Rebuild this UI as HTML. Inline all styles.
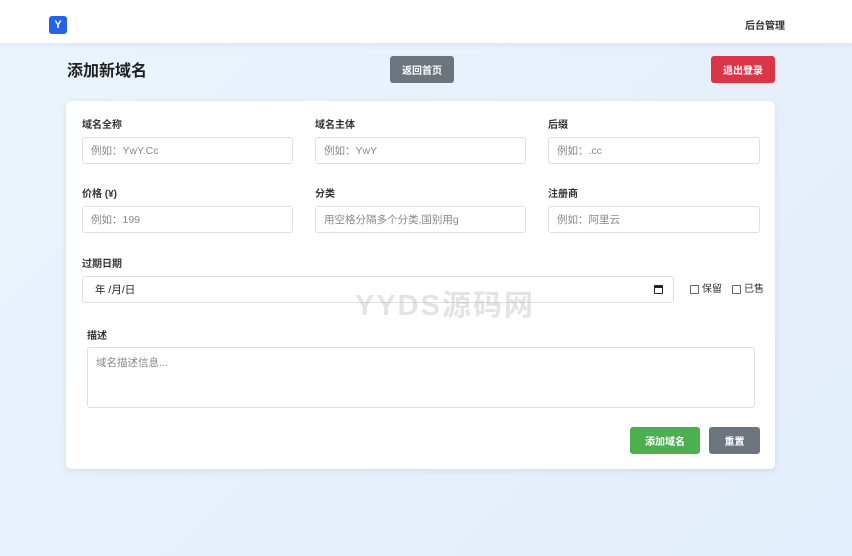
<!DOCTYPE html>
<html><head><meta charset="utf-8"><style>
*{box-sizing:border-box;margin:0;padding:0}
body{width:852px;height:556px;overflow:hidden;position:relative;font-family:"Liberation Sans","Noto Sans CJK SC",sans-serif;background:linear-gradient(135deg,#eaf4fc 0%,#e6f0fb 60%,#e2eefb 100%);color:#333}
.a{position:absolute}
.hdr{left:0;top:0;width:852px;height:43px;background:#fff;box-shadow:0 2px 6px rgba(0,0,0,.06)}
.logo{left:49px;top:16px;width:18px;height:18px;background:#2563eb;border-radius:3px;color:#fff;font-weight:bold;font-size:11px;display:flex;align-items:center;justify-content:center}
.btn{border-radius:3px;color:#fff;font-size:10px;font-weight:bold;display:flex;align-items:center;justify-content:center}
.card{left:66px;top:101px;width:709px;height:368px;background:#fff;border-radius:6px;box-shadow:0 2px 8px rgba(0,0,0,.08)}
.lbl{font-size:10px;font-weight:bold;color:#333;line-height:14px}
.in{border:1px solid #dcdfe3;border-radius:3px;height:27px;font-size:10.5px;color:#888;padding-left:8px;background:#fff;display:flex;align-items:center}
.cb{width:9px;height:9px;border:1px solid #666;border-radius:1px;display:inline-block;vertical-align:middle;margin-right:3px}
</style></head><body>
<div class="a hdr"></div>
<div class="a logo">Y</div>
<div class="a" style="left:745px;top:20px;font-size:10px;font-weight:bold;line-height:14px">后台管理</div>
<div class="a" style="left:67px;top:61px;font-size:16px;font-weight:bold;color:#222;line-height:22px">添加新域名</div>
<div class="a btn" style="left:390px;top:56px;width:64px;height:27px;background:#6c757d">返回首页</div>
<div class="a btn" style="left:711px;top:56px;width:64px;height:27px;background:#dc3545">退出登录</div>
<div class="a card"></div>

<div class="a lbl" style="left:82px;top:119px">域名全称</div>
<div class="a lbl" style="left:315px;top:119px">域名主体</div>
<div class="a lbl" style="left:548px;top:119px">后缀</div>
<div class="a in" style="left:82px;top:137px;width:211px">例如：YwY.Cc</div>
<div class="a in" style="left:315px;top:137px;width:211px">例如：YwY</div>
<div class="a in" style="left:548px;top:137px;width:212px">例如：.cc</div>

<div class="a lbl" style="left:82px;top:188px">价格 (¥)</div>
<div class="a lbl" style="left:315px;top:188px">分类</div>
<div class="a lbl" style="left:548px;top:188px">注册商</div>
<div class="a in" style="left:82px;top:206px;width:211px">例如：199</div>
<div class="a in" style="left:315px;top:206px;width:211px">用空格分隔多个分类,国别用g</div>
<div class="a in" style="left:548px;top:206px;width:212px">例如：阿里云</div>

<div class="a lbl" style="left:82px;top:258px">过期日期</div>
<div class="a in" style="left:82px;top:276px;width:592px;color:#222;padding-left:12px">年 /月/日</div>
<div class="a" style="left:654px;top:285px;width:9px;height:9px;border:1.5px solid #222;border-top-width:3px;border-radius:1px"></div>
<div class="a" style="left:690px;top:283px;font-size:10px;color:#333;line-height:14px"><span class="cb"></span>保留</div>
<div class="a" style="left:732px;top:283px;font-size:10px;color:#333;line-height:14px"><span class="cb"></span>已售</div>

<div class="a" style="left:355px;top:289px;font-size:29px;font-weight:bold;color:rgba(185,185,185,.4);letter-spacing:2px;line-height:34px">YYDS源码网</div>

<div class="a lbl" style="left:87px;top:330px">描述</div>
<div class="a in" style="left:87px;top:347px;width:668px;height:61px;align-items:flex-start;padding-top:7px">域名描述信息...</div>

<div class="a btn" style="left:630px;top:427px;width:70px;height:27px;background:#4caf50">添加域名</div>
<div class="a btn" style="left:709px;top:427px;width:51px;height:27px;background:#6c757d">重置</div>
</body></html>
